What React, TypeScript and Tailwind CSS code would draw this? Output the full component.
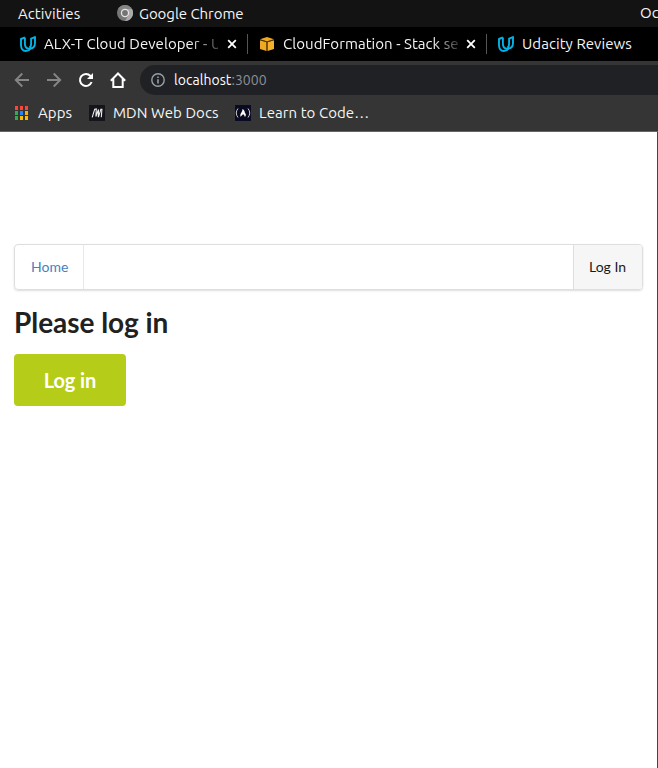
import type { ReactNode } from "react";

const UI_FONT = "font-['Ubuntu','Noto_Sans',sans-serif]";

function UdacityIcon() {
  return (
    <svg width="16" height="16" viewBox="0 0 16 16" className="shrink-0" fill="none" stroke="#02b3e4" strokeWidth="1.900" strokeLinejoin="round">
      <path d="M4.900 1.400 1 3V9c0 3.500 1.800 6 4.800 6 2 0 3.600-.9 4.600-2.400" />
      <path d="M4.900 1.400V8c0 2.800 1.700 4.600 4.500 4.600C12.800 12.600 15 10.500 15 7V1l-3.900 1.700V8c0 1.800-.6 3-1.800 3.400" />
    </svg>
  );
}

function BoxIcon() {
  return (
    <svg width="16" height="16" viewBox="0 0 16 16" className="shrink-0">
      <path d="M1 3.200 8 1l7 2.200-7 2.300z" fill="#f0a81c" />
      <path d="M1 4.200 7.500 6.200V15L1 13z" fill="#f0aa22" />
      <path d="M8.500 6.200 15 4.200V13l-6.500 2z" fill="#f5b02c" />
      <path d="M1 3.700 8 5.800l7-2.100M8 5.800V15" stroke="#7a4d06" strokeWidth=".7" fill="none" />
    </svg>
  );
}

function ChromeIcon() {
  return (
    <svg width="16" height="16" viewBox="0 0 16 16" className="mb-px shrink-0">
      <circle cx="8" cy="8" r="8" fill="#777" />
      <path d="M8 4h7A8 8 0 0 1 8 16l3.500-6z" fill="#aaa" />
      <path d="M1.100 4A8 8 0 0 1 14.900 4H8L4.500 6z" fill="#858585" />
      <circle cx="8" cy="8" r="4.200" fill="#e5e5e5" />
      <circle cx="8" cy="8" r="2.900" fill="#747474" />
    </svg>
  );
}

function CloseIcon() {
  return (
    <svg width="10" height="10" viewBox="0 0 10 10" className="shrink-0" stroke="#fff" strokeWidth="1.800">
      <path d="m1.200 1.200 7.600 7.600M8.800 1.200 1.200 8.800" />
    </svg>
  );
}

function Tab({ icon, label, labelClass, close }: { icon: ReactNode; label: string; labelClass: string; close?: boolean }) {
  return (
    <div className="flex h-full shrink-0 items-center">
      {icon}
      <span className={"ml-2 whitespace-nowrap text-[15px] text-[#f5f5f5] " + labelClass}>{label}</span>
      {close && <CloseIcon />}
    </div>
  );
}

function AppsIcon() {
  const colors = ["#ff4436", "#ff4436", "#ff4436", "#34a853", "#2684fc", "#fbaf04", "#34a853", "#fbbc04", "#fbbc04"];
  return (
    <div className="grid grid-cols-3 gap-x-[2px] gap-y-[1px]">
      {colors.map((color, i) => (
        <div key={i} className="h-[4px] w-[3px]" style={{ backgroundColor: color }} />
      ))}
    </div>
  );
}

function Toolbar() {
  return (
    <div className="flex h-[38px] items-center overflow-hidden bg-[#353535]">
      <div className="flex w-[140px] shrink-0 items-center gap-4 pl-[14px]">
        <svg width="16" height="16" viewBox="0 0 16 16" fill="none" stroke="#858585" strokeWidth="1.900"><path d="M15 8H2.300M8.300 1.500 1.800 8l6.500 6.500" /></svg>
        <svg width="16" height="16" viewBox="0 0 16 16" fill="none" stroke="#858585" strokeWidth="1.900"><path d="M1 8h12.700M7.700 1.500 14.200 8l-6.500 6.500" /></svg>
        <svg width="16" height="16" viewBox="0 0 16 16" fill="none" stroke="#fff" strokeWidth="2"><path d="M13.600 10A6 6 0 1 1 12.500 4L14 5.800" /><path d="M15 1v6H9z" fill="#fff" stroke="none" /></svg>
        <svg width="16" height="16" viewBox="0 0 16 16" fill="none" stroke="#fff" strokeWidth="2"><path d="M.8 8.700 8 1.500l7.200 7.200M3.300 6.800V15h9.400V6.800" /></svg>
      </div>
      <div className="flex h-[30px] flex-1 items-center rounded-l-full bg-[#202124] pl-[11px]">
        <svg width="14" height="14" viewBox="0 0 14 14" fill="none" stroke="#9aa0a6" strokeWidth="1.400"><circle cx="7" cy="7" r="6.200" /><path d="M7 6.200v4.300M7 3.400v1.500" strokeWidth="1.600" /></svg>
        <span className="ml-[9px] whitespace-nowrap text-[14px] tracking-[0.050px] text-white">localhost<span className="text-[#8b8f94]">:3000</span></span>
      </div>
    </div>
  );
}

function Bookmarks() {
  return (
    <div className="flex h-[33px] items-center border-b border-[#666] bg-[#353535] pb-1 pl-[15px] text-[15px] tracking-[0.060px] whitespace-nowrap text-[#f5f5f5]">
      <AppsIcon />
      <span className="ml-[10px] w-[51px]">Apps</span>
      <svg width="16" height="16" viewBox="0 0 16 16" fill="none"><path fill="#15141a" d="M0 0h16v16H0z" /><path d="M3.200 12.300 5.700 4.200 7.300 4 6.900 11.500 9.500 4.500M9.400 12.200 11.900 4.200h1L12.300 12.300M9.500 4.500 9.300 12" stroke="#eee" strokeWidth="1.100" /></svg>
      <span className="ml-2 w-[122px]">MDN Web Docs</span>
      <svg width="16" height="16" viewBox="0 0 16 16" fill="none"><path fill="#0a0a23" d="M0 0h16v16H0z" /><path d="M3 3.500Q-.5 8 3 12.500M13 3.500q3.500 4.500 0 9" stroke="#ccc" /><path d="M5.700 12C4.300 8.500 7.500 7.500 7.500 4c2.500 1.500 2 3 2.500 4 1.500 1.500.8 3-.2 4-.2-1.500-.8-2-1.800-3-.2 1.300-2 1.500-2.300 3z" fill="#fff" /></svg>
      <span className="ml-2">Learn to Code…</span>
    </div>
  );
}

export default function App() {
  return (
    <div className={"flex h-[768px] w-[658px] flex-col overflow-hidden bg-white " + UI_FONT}>
      <div className="flex h-[27px] shrink-0 items-center overflow-hidden bg-[#131313] pl-[18px] text-[15px] whitespace-nowrap text-[#f5f5f5]">
        <span className="w-[99px] shrink-0 pt-[2px] tracking-[0.080px]">Activities</span>
        <ChromeIcon />
        <span className="ml-[6px] w-[501px] shrink-0 pt-[2px] tracking-[-0.050px]">Google Chrome</span>
        <span>Oc</span>
      </div>
      <div className="flex h-[34px] shrink-0 items-center overflow-hidden bg-black pl-5">
        <Tab icon={<UdacityIcon />} label="ALX-T Cloud Developer - U" labelClass="w-[174px] mr-[9px] tracking-[0.040px] [mask-image:linear-gradient(to_right,#000_145px,transparent_185px)]" close />
        <div className="mr-[11px] ml-[10px] h-5 w-px shrink-0 bg-[#555]" />
        <Tab icon={<BoxIcon />} label="CloudFormation - Stack se" labelClass="w-[175px] mr-[8px] tracking-[0.040px] [mask-image:linear-gradient(to_right,#000_150px,transparent_182px)]" close />
        <div className="mr-[11px] ml-[10px] h-5 w-px shrink-0 bg-[#555]" />
        <Tab icon={<UdacityIcon />} label="Udacity Reviews" labelClass="tracking-[0.060px]" />
      </div>
      <Toolbar />
      <Bookmarks />
      <main className="flex-1 border-r border-[#444] pt-[112px] pr-[14px] pl-[14px] font-['Lato',sans-serif]">
        <nav className="flex h-[46px] justify-between overflow-hidden rounded-[4px] border border-[#dededf] text-[14px] shadow-[0_1px_2px_0_rgba(34,36,38,0.15)]">
          <a className="flex w-[69px] items-center border-r border-[#e8e8e8] pb-[2px] pl-4 text-[#4183c4]">Home</a>
          <a className="flex w-[69px] items-center border-l border-[#dededf] bg-[#f6f6f6] pb-[2px] pl-[15px] text-[#1a1a1a]">Log In</a>
        </nav>
        <h1 className="mt-[14px] text-[28px] leading-9 font-bold tracking-[-0.040px] text-[#212121]">Please log in</h1>
        <button className="mt-[14px] flex h-[52px] w-[112px] items-center justify-center rounded-[4px] bg-[#b5cc18] text-[20px] font-bold tracking-[-0.100px] text-white">Log in</button>
      </main>
    </div>
  );
}
